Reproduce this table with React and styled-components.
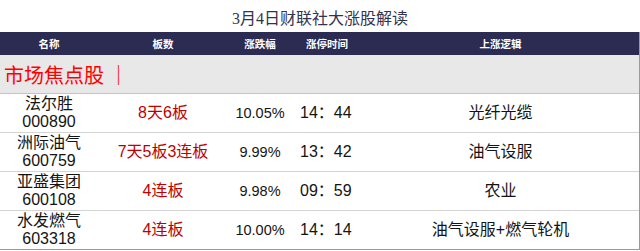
import React from "react";
import styled, { createGlobalStyle } from "styled-components";

const Global = createGlobalStyle`
  html, body { margin: 0; padding: 0; background: #ffffff; }
  body { font-family: "Liberation Sans", "Noto Sans CJK SC", sans-serif; }
`;

const Page = styled.div`
  width: 640px;
  height: 251px;
  background: #fff;
  overflow: hidden;
`;

const Title = styled.div`
  height: 32px;
  box-sizing: border-box;
  padding-top: 9px;
  text-align: center;
  font-family: "Liberation Serif", "Noto Sans CJK SC", serif;
  font-size: 16px;
  line-height: 20px;
  color: #33334f;
`;

const Table = styled.div`
  width: 640px;
  box-sizing: border-box;
  border-right: 1px solid #9a9a9a;
  border-bottom: 1px solid #9a9a9a;
`;

const cols = "98px 130px 64px 70px 1fr";

const HeadRow = styled.div`
  display: grid;
  grid-template-columns: ${cols};
  height: 23px;
  background: #2c2b52;
  align-items: center;
`;

const HeadCell = styled.div`
  text-align: center;
  color: #ffffff;
  font-size: 10.5px;
  font-weight: bold;
  font-family: "Noto Sans CJK SC", sans-serif;
`;

const Section = styled.div`
  height: 38px;
  background: #e8e8e8;
  border-bottom: 1px solid #c4c4c4;
  display: flex;
  align-items: center;
  padding-left: 4px;
  font-family: "Noto Sans CJK SC", serif;
  font-size: 20px;
  color: #ff0000;
  white-space: pre;
`;

const Row = styled.div`
  display: grid;
  grid-template-columns: ${cols};
  height: 38px;
  border-bottom: 1px solid #d4d4d4;
  align-items: center;
  &:last-child { border-bottom: none; height: 38px; }
`;

const Cell = styled.div`
  text-align: ${(p) => p.$align || "center"};
  font-size: ${(p) => p.$size || "16px"};
  line-height: 18px;
  color: ${(p) => (p.$red ? "#c00000" : "#141414")};
  padding-left: ${(p) => p.$pl || "0"};
  white-space: nowrap;
`;

const rows = [
  { name: "法尔胜", code: "000890", boards: "8天6板", pct: "10.05%", time: "14：44", reason: "光纤光缆" },
  { name: "洲际油气", code: "600759", boards: "7天5板3连板", pct: "9.99%", time: "13：42", reason: "油气设服" },
  { name: "亚盛集团", code: "600108", boards: "4连板", pct: "9.98%", time: "09：59", reason: "农业" },
  { name: "水发燃气", code: "603318", boards: "4连板", pct: "10.00%", time: "14：14", reason: "油气设服+燃气轮机" },
];

export default function App() {
  return (
    <Page>
      <Global />
      <Title>3月4日财联社大涨股解读</Title>
      <Table>
        <HeadRow>
          <HeadCell>名称</HeadCell>
          <HeadCell>板数</HeadCell>
          <HeadCell>涨跌幅</HeadCell>
          <HeadCell>涨停时间</HeadCell>
          <HeadCell>上涨逻辑</HeadCell>
        </HeadRow>
        <Section>市场焦点股 ｜</Section>
        {rows.map((r) => (
          <Row key={r.code}>
            <Cell>
              {r.name}
              <br />
              {r.code}
            </Cell>
            <Cell $red>{r.boards}</Cell>
            <Cell $size="14.5px">{r.pct}</Cell>
            <Cell $align="left" $pl="8px">{r.time}</Cell>
            <Cell>{r.reason}</Cell>
          </Row>
        ))}
      </Table>
    </Page>
  );
}
